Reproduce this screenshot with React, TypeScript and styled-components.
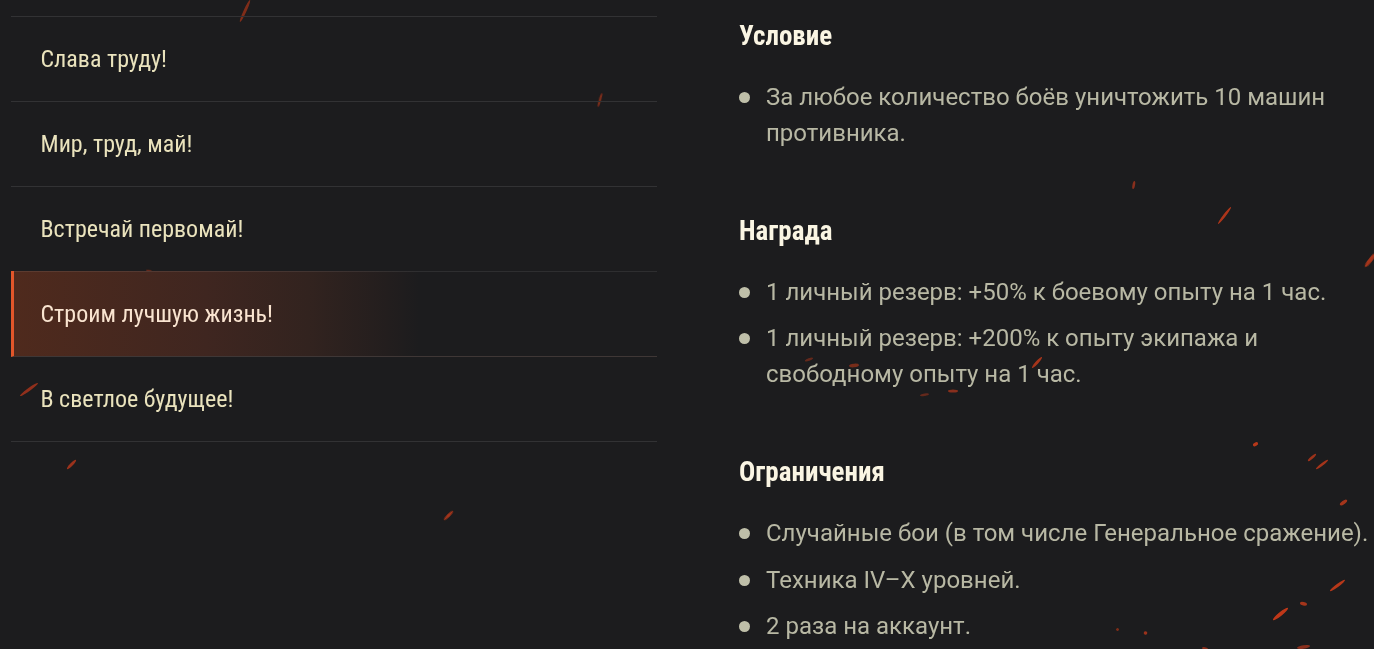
import React from "react";
import styled, { createGlobalStyle } from "styled-components";

const Global = createGlobalStyle`
  html, body { margin: 0; padding: 0; height: 100%; background: #1c1c1e; overflow: hidden; }
  #root { height: 100%; }
`;

const Page = styled.div`
  position: relative;
  height: 649px;
  overflow: hidden;
  background: #1c1c1e;
`;

const Sparks = styled.svg`
  position: absolute;
  inset: 0;
  width: 1374px;
  height: 649px;
  z-index: 0;
`;

const Layout = styled.div`
  position: relative;
  z-index: 1;
  display: grid;
  grid-template-columns: 646px 1fr;
  column-gap: 82px;
  padding: 16px 0 0 11px;
`;

const Menu = styled.ul`
  list-style: none;
  margin: 0;
  padding: 0;
  border-top: 1px solid #323234;
`;

const MenuItem = styled.li<{ $active?: boolean }>`
  box-sizing: border-box;
  display: flex;
  align-items: center;
  padding-left: ${(p) => (p.$active ? "26.5px" : "29.5px")};
  border-bottom: 1px solid ${(p) => (p.$active ? "#3f3736" : "#323234")};
  border-left: ${(p) => (p.$active ? "3px solid #e2562a" : "0")};
  margin-top: ${(p) => (p.$active ? "-1px" : "0")};
  height: ${(p) => (p.$active ? "86px" : "85px")};
  background: ${(p) =>
    p.$active
      ? "linear-gradient(180deg, rgba(255,255,255,0.08) 0, rgba(255,255,255,0.08) 1px, transparent 1px), linear-gradient(90deg, #4f2a1d 0%, #3f2620 30%, #32231f 46%, #231e1e 58%, #1c1c1e 63%)"
      : "transparent"};
  color: ${(p) => (p.$active ? "#f9e4d0" : "#eae3bd")};
  font-family: "Roboto Condensed", Roboto, sans-serif;
  font-stretch: 75%;
  font-size: 24px;
  line-height: 30px;
`;

const Details = styled.div`
  display: flex;
  flex-direction: column;
  margin-top: -16px;
`;

const Section = styled.section`
  margin-bottom: 33.6px;
`;

const Heading = styled.h3`
  margin: 0 0 23px;
  padding-top: 17px;
  color: #faf5e3;
  font-family: "Roboto Condensed", Roboto, sans-serif;
  font-stretch: 75%;
  font-weight: 700;
  font-size: 27px;
  line-height: 39px;
`;

const Bullets = styled.ul`
  list-style: none;
  margin: 0;
  padding: 0;
`;

const Bullet = styled.li`
  position: relative;
  padding-left: 27px;
  margin-bottom: 10.4px;
  color: #b8b8a4;
  font-family: Roboto, sans-serif;
  font-size: 24px;
  line-height: 36px;
  &::before {
    content: "";
    position: absolute;
    left: 0;
    top: 13px;
    width: 11px;
    height: 11px;
    border-radius: 50%;
    background: #bfbfa9;
  }
`;

type Spark = [number, number, number, number, number, number];

const sparks: Spark[] = [
  [250, 0, 240, 22, 3, 0.55],
  [602, 93, 598, 107, 2.6, 0.5],
  [1134.5, 181, 1133, 189, 2.6, 0.6],
  [1231, 207, 1218, 224, 2.8, 0.8],
  [1376, 253, 1365, 267, 4, 0.75],
  [38, 383, 20, 396, 3, 0.65],
  [76, 460, 67, 469, 3, 0.7],
  [453, 511, 444, 520, 3, 0.75],
  [1253, 445.5, 1258, 443, 3.6, 0.85],
  [1316, 454, 1308, 461, 2.6, 0.7],
  [1328, 460, 1316, 469, 2.6, 0.75],
  [1347, 500, 1340, 505, 3.4, 0.75],
  [1345, 580, 1330, 591, 3, 0.85],
  [1300, 603, 1307, 604.5, 3.6, 0.75],
  [1288, 608, 1273, 620, 3.8, 0.9],
  [1116.5, 628.5, 1118.5, 630.5, 3, 0.55],
  [1144, 632, 1147, 634, 3.4, 0.7],
  [1202, 648, 1208, 649, 2.6, 0.6],
  [1297, 648, 1310, 646, 3.6, 0.6],
  [1042, 357, 1032, 368, 3, 0.75],
  [805, 361, 813, 358, 2.6, 0.4],
  [849, 366, 859, 365, 3.6, 0.5],
  [920, 395.5, 929, 394, 2.6, 0.4],
  [948, 391, 958, 391, 3, 0.6],
  [146, 270.5, 152, 271.5, 2.6, 0.4],
];

export default function App() {
  return (
    <Page>
      <Global />
      <Sparks viewBox="0 0 1374 649" aria-hidden="true">
        <defs>
          <filter id="glow" x="-50%" y="-50%" width="200%" height="200%">
            <feGaussianBlur stdDeviation="0.6" />
          </filter>
        </defs>
        <g filter="url(#glow)">
          {sparks.map(([x1, y1, x2, y2, w, o], i) => {
            const cx = (x1 + x2) / 2;
            const cy = (y1 + y2) / 2;
            const len = Math.hypot(x2 - x1, y2 - y1);
            const angle = (Math.atan2(y2 - y1, x2 - x1) * 180) / Math.PI;
            return (
              <ellipse
                key={i}
                cx={cx}
                cy={cy}
                rx={len / 2}
                ry={w / 2}
                fill="#d13c1a"
                opacity={o}
                transform={`rotate(${angle} ${cx} ${cy})`}
              />
            );
          })}
        </g>
      </Sparks>
      <Layout>
        <Menu>
          <MenuItem>Слава труду!</MenuItem>
          <MenuItem>Мир, труд, май!</MenuItem>
          <MenuItem>Встречай первомай!</MenuItem>
          <MenuItem $active>Строим лучшую жизнь!</MenuItem>
          <MenuItem>В светлое будущее!</MenuItem>
        </Menu>
        <Details>
          <Section>
            <Heading>Условие</Heading>
            <Bullets>
              <Bullet>За любое количество боёв уничтожить 10 машин противника.</Bullet>
            </Bullets>
          </Section>
          <Section>
            <Heading>Награда</Heading>
            <Bullets>
              <Bullet>1 личный резерв: +50% к боевому опыту на 1 час.</Bullet>
              <Bullet>1 личный резерв: +200% к опыту экипажа и свободному опыту на 1 час.</Bullet>
            </Bullets>
          </Section>
          <Section>
            <Heading>Ограничения</Heading>
            <Bullets>
              <Bullet>Случайные бои (в том числе Генеральное сражение).</Bullet>
              <Bullet>Техника IV–X уровней.</Bullet>
              <Bullet>2 раза на аккаунт.</Bullet>
            </Bullets>
          </Section>
        </Details>
      </Layout>
    </Page>
  );
}
